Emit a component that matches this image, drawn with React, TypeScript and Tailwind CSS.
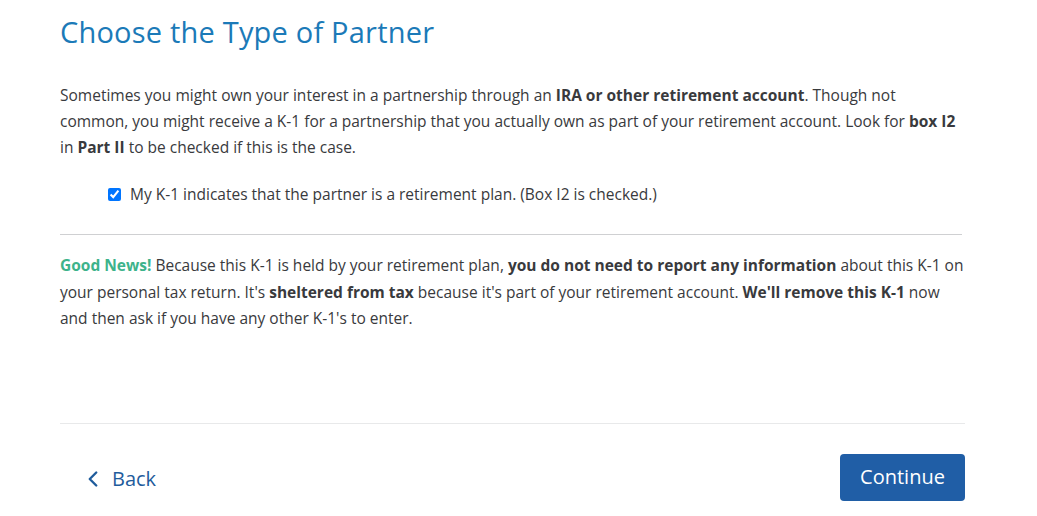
import { ChevronLeft } from "lucide-react";

export default function App() {
  return (
    <main
      className="min-h-screen bg-white text-[#393a3d]"
      style={{ fontFamily: '"Open Sans", "Noto Sans", sans-serif' }}
    >
      <div className="w-[905px] ml-[60px]">
        <h1 className="pt-[13px] text-[29px] leading-[38px] text-[#1b7ab8] font-normal tracking-[0.2px]">
          Choose the Type of Partner
        </h1>

        <p className="mt-[31px] text-[15.5px] leading-[26px]">
          Sometimes you might own your interest in a partnership through an{" "}
          <b className="font-bold">IRA or other retirement account</b>. Though not common, you might
          receive a K-1 for a partnership that you actually own as part of your retirement account.
          Look for <b className="font-bold">box I2</b> in <b className="font-bold">Part II</b> to be
          checked if this is the case.
        </p>

        <label className="mt-[24px] ml-[48px] flex items-center gap-[9px] text-[15.5px] leading-[20px]">
          <input type="checkbox" defaultChecked className="w-[13px] h-[13px] accent-[#0075ff]" />
          <span>My K-1 indicates that the partner is a retirement plan. (Box I2 is checked.)</span>
        </label>

        <div className="mt-[30px] border-t border-[#cfd0d2] w-[902px]" />

        <p className="mt-[17px] text-[15.5px] leading-[26.5px]">
          <b className="font-bold text-[#3db38b]">Good News!</b> Because this K-1 is held by your
          retirement plan, <b className="font-bold">you do not need to report any information</b>{" "}
          about this K-1 on your personal tax return. It's{" "}
          <b className="font-bold">sheltered from tax</b> because it's part of your retirement
          account. <b className="font-bold">We'll remove this K-1</b> now and then ask if you have
          any other K-1's to enter.
        </p>

        <div className="mt-[91px] border-t border-[#e8e9ea]" />

        <div className="mt-[30px] flex items-center justify-between">
          <button className="ml-[20px] mt-[3px] flex items-center gap-[6px] text-[#1f5c9c] text-[20px]">
            <ChevronLeft className="w-[26px] h-[26px]" strokeWidth={2.2} />
            <span>Back</span>
          </button>
          <button className="w-[125px] h-[47px] rounded-[4px] bg-[#205ea6] text-white text-[20px] font-medium">
            Continue
          </button>
        </div>
      </div>
    </main>
  );
}
